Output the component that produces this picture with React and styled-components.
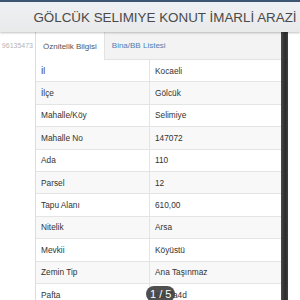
import styled, { createGlobalStyle } from 'styled-components';

const rows = [
    ['İl', 'Kocaeli'],
    ['İlçe', 'Gölcük'],
    ['Mahalle/Köy', 'Selimiye'],
    ['Mahalle No', '147072'],
    ['Ada', '110'],
    ['Parsel', '12'],
    ['Tapu Alanı', '610,00'],
    ['Nitelik', 'Arsa'],
    ['Mevkii', 'Köyüstü'],
    ['Zemin Tip', 'Ana Taşınmaz'],
    ['Pafta', 'c207a4d'],
];

const GlobalStyle = createGlobalStyle`
    html, body {
        margin: 0;
        padding: 0;
        background: #fff;
        font-family: 'Liberation Sans', Arial, sans-serif;
    }
`;

export default function App() {
    return (
        <>
            <GlobalStyle />
            <Page>
                <TopLine />
                <Header>
                    <Title>GÖLCÜK SELIMIYE KONUT İMARLİ ARAZİ</Title>
                </Header>
                <Body>
                    <Side>
                        <SideId>96135473</SideId>
                    </Side>
                    <Main>
                        <Tabs>
                            <Tab $active>Öznitelik Bilgisi</Tab>
                            <Tab>Bina/BB Listesi</Tab>
                        </Tabs>
                        <Table>
                            {rows.map(([label, value], i) => (
                                <Row key={label} $striped={i % 2 === 1}>
                                    <Cell $label>{label}</Cell>
                                    <Cell>{value}</Cell>
                                </Row>
                            ))}
                        </Table>
                        <Pager>1 / 5</Pager>
                    </Main>
                    <ScrollBar />
                    <Gutter />
                </Body>
            </Page>
        </>
    );
}

const Page = styled.div`
    width: 300px;
    height: 300px;
    overflow: hidden;
    display: flex;
    flex-direction: column;
    background: #fff;
`;

const TopLine = styled.div`
    height: 2px;
    background: #3d5673;
    flex-shrink: 0;
`;

const Header = styled.header`
    height: 30px;
    flex-shrink: 0;
    display: flex;
    align-items: center;
    justify-content: center;
    padding-left: 30px;
    background: linear-gradient(#eef1f4, #e9e9ea);
    box-shadow: 0 1px 2px rgba(0, 0, 0, 0.25);
    position: relative;
    z-index: 1;
`;

const Title = styled.h1`
    margin: 0;
    font-size: 13.4px;
    font-weight: 400;
    color: #4a4a4a;
    white-space: nowrap;
`;

const Body = styled.div`
    flex: 1;
    display: flex;
    min-height: 0;
`;

const Side = styled.aside`
    width: 35px;
    flex-shrink: 0;
    overflow: hidden;
    padding-top: 10px;
    box-sizing: border-box;
`;

const SideId = styled.div`
    font-size: 7px;
    color: #b5b5b5;
    text-align: right;
    padding-right: 2px;
    white-space: nowrap;
`;

const Main = styled.main`
    width: 246px;
    flex-shrink: 0;
    border-left: 1px solid #dcdcdc;
    box-sizing: border-box;
    display: flex;
    flex-direction: column;
    position: relative;
`;

const Tabs = styled.nav`
    height: 28px;
    flex-shrink: 0;
    display: flex;
    background: #f3f3f3;
    border-bottom: 1px solid #e2e2e2;
    box-sizing: border-box;
`;

const Tab = styled.div`
    display: flex;
    align-items: center;
    padding: 0 7px;
    font-size: 8px;
    color: ${(p) => (p.$active ? '#555' : '#4f7fb4')};
    background: ${(p) => (p.$active ? '#fff' : 'transparent')};
    border-right: ${(p) => (p.$active ? '1px solid #e2e2e2' : 'none')};
    margin-bottom: ${(p) => (p.$active ? '-1px' : '0')};
`;

const Table = styled.div`
    display: flex;
    flex-direction: column;
`;

const Row = styled.div`
    height: 22.4px;
    flex-shrink: 0;
    display: grid;
    grid-template-columns: 114px 1fr;
    border-bottom: 1px solid #e4e4e4;
    box-sizing: border-box;
    background: ${(p) => (p.$striped ? '#f8f8f8' : '#fff')};
`;

const Cell = styled.div`
    display: flex;
    align-items: center;
    padding-left: 5px;
    font-size: 8.3px;
    color: #333;
    border-right: ${(p) => (p.$label ? '1px solid #e4e4e4' : 'none')};
`;

const Pager = styled.div`
    position: absolute;
    left: 110px;
    top: 254px;
    padding: 2px 4px;
    border-radius: 9px;
    background: rgba(55, 55, 55, 0.88);
    color: #fff;
    font-size: 11px;
    line-height: 12px;
`;

const ScrollBar = styled.div`
    width: 7px;
    flex-shrink: 0;
    background: linear-gradient(90deg, #4a4a4a, #2c2c2c 60%, #3f3f3f);
`;

const Gutter = styled.div`
    flex: 1;
    background: #fff;
`;
